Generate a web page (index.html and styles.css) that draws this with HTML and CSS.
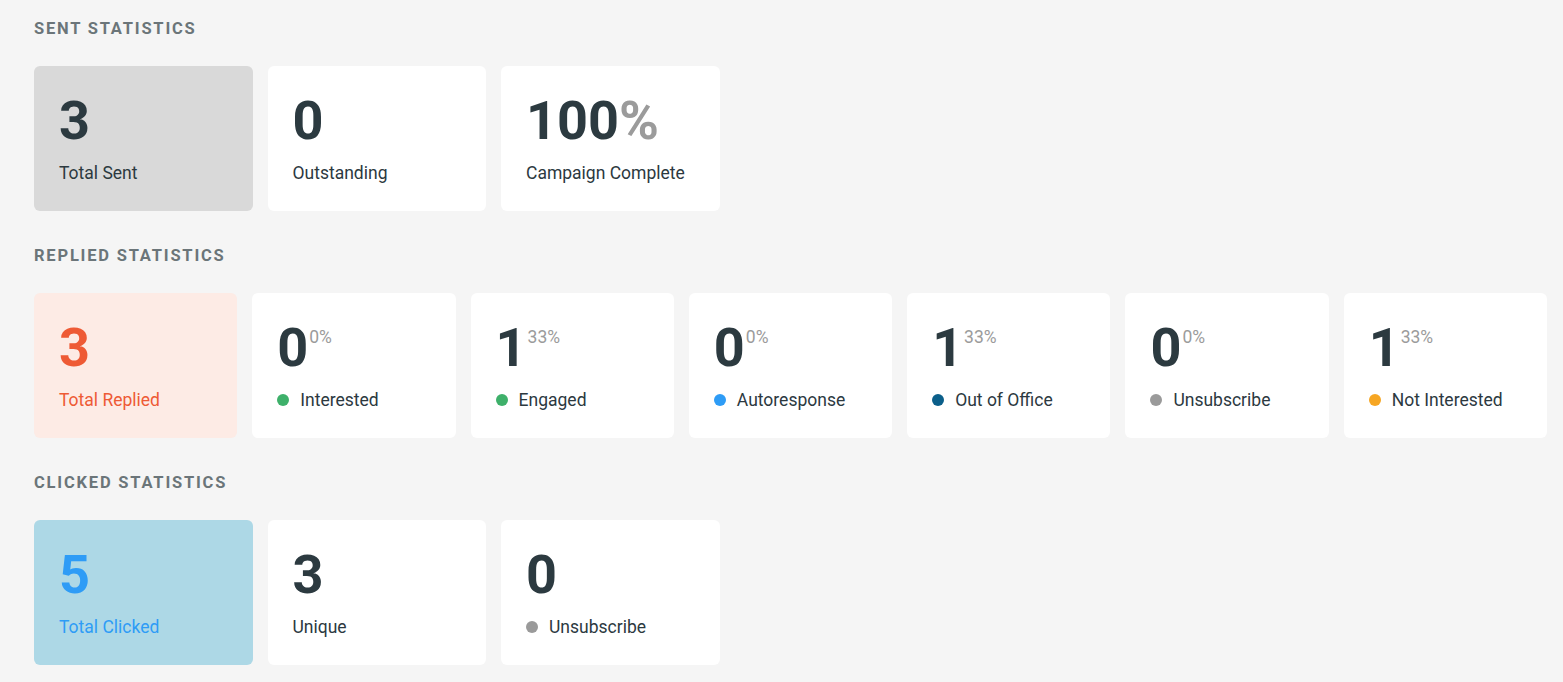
FILE: index.html
```html
<!DOCTYPE html>
<html>
<head>
<meta charset="utf-8">
<link rel="stylesheet" href="styles.css">
</head>
<body>
<div class="page">
  <section class="section">
    <h2 class="heading">SENT STATISTICS</h2>
    <div class="row row-fixed">
      <div class="card card-gray">
        <div class="num-line"><span class="num">3</span></div>
        <div class="label">Total Sent</div>
      </div>
      <div class="card">
        <div class="num-line"><span class="num">0</span></div>
        <div class="label">Outstanding</div>
      </div>
      <div class="card">
        <div class="num-line"><span class="num">100<span class="pct-big">%</span></span></div>
        <div class="label">Campaign Complete</div>
      </div>
    </div>
  </section>

  <section class="section">
    <h2 class="heading">REPLIED STATISTICS</h2>
    <div class="row row-fluid">
      <div class="card card-red">
        <div class="num-line"><span class="num">3</span></div>
        <div class="label">Total Replied</div>
      </div>
      <div class="card">
        <div class="num-line"><span class="num">0</span><span class="pct">0%</span></div>
        <div class="label"><span class="dot dot-green"></span>Interested</div>
      </div>
      <div class="card">
        <div class="num-line"><span class="num">1</span><span class="pct">33%</span></div>
        <div class="label"><span class="dot dot-green"></span>Engaged</div>
      </div>
      <div class="card">
        <div class="num-line"><span class="num">0</span><span class="pct">0%</span></div>
        <div class="label"><span class="dot dot-blue"></span>Autoresponse</div>
      </div>
      <div class="card">
        <div class="num-line"><span class="num">1</span><span class="pct">33%</span></div>
        <div class="label"><span class="dot dot-navy"></span>Out of Office</div>
      </div>
      <div class="card">
        <div class="num-line"><span class="num">0</span><span class="pct">0%</span></div>
        <div class="label"><span class="dot dot-gray"></span>Unsubscribe</div>
      </div>
      <div class="card">
        <div class="num-line"><span class="num">1</span><span class="pct">33%</span></div>
        <div class="label"><span class="dot dot-orange"></span>Not Interested</div>
      </div>
    </div>
  </section>

  <section class="section">
    <h2 class="heading">CLICKED STATISTICS</h2>
    <div class="row row-fixed">
      <div class="card card-blue">
        <div class="num-line"><span class="num">5</span></div>
        <div class="label">Total Clicked</div>
      </div>
      <div class="card">
        <div class="num-line"><span class="num">3</span></div>
        <div class="label">Unique</div>
      </div>
      <div class="card">
        <div class="num-line"><span class="num">0</span></div>
        <div class="label"><span class="dot dot-gray"></span>Unsubscribe</div>
      </div>
    </div>
  </section>
</div>
</body>
</html>
```

FILE: styles.css
```css
html, body {
  margin: 0;
  padding: 0;
  background: #f5f5f5;
}
body {
  font-family: Roboto, "Liberation Sans", Arial, sans-serif;
  color: #2c393f;
}
.page {
  padding: 19px 16px 0 34px;
}
.section {
  margin-bottom: 35px;
}
.heading {
  margin: 0 0 27px 0;
  font-size: 16.5px;
  line-height: 20px;
  font-weight: 700;
  letter-spacing: 1.8px;
  color: #6b7579;
}
.row {
  display: flex;
  gap: 15px;
}
.row-fixed .card {
  width: 218.5px;
}
.row-fluid .card {
  flex: 1 1 0;
  min-width: 0;
}
.card {
  box-sizing: border-box;
  height: 145px;
  background: #ffffff;
  border-radius: 6px;
  padding: 28px 0 0 25px;
}
.num-line {
  display: flex;
  align-items: flex-start;
  height: 55px;
}
.num {
  font-size: 54px;
  line-height: 54px;
  font-weight: 700;
  color: #2c3a40;
}
.pct-big {
  color: #9b9b9b;
}
.pct {
  margin-top: 7px;
  margin-left: 1px;
  font-size: 17.5px;
  line-height: 18px;
  color: #9b9b9b;
}
.label {
  display: flex;
  align-items: center;
  margin-top: 12px;
  font-size: 17.5px;
  line-height: 24px;
  color: #2c393f;
}
.dot {
  width: 12px;
  height: 12px;
  border-radius: 50%;
  margin-right: 11px;
  flex: none;
}
.dot-green { background: #3eb06a; }
.dot-blue { background: #2e9cf6; }
.dot-navy { background: #0b5f8a; }
.dot-gray { background: #9a9a9a; }
.dot-orange { background: #f6a623; }

.card-gray { background: #d9d9d9; }
.card-red { background: #fdebe5; }
.card-red .num, .card-red .label { color: #ee5a35; }
.card-blue { background: #add8e6; }
.card-blue .num, .card-blue .label { color: #2e9cf6; }
```
